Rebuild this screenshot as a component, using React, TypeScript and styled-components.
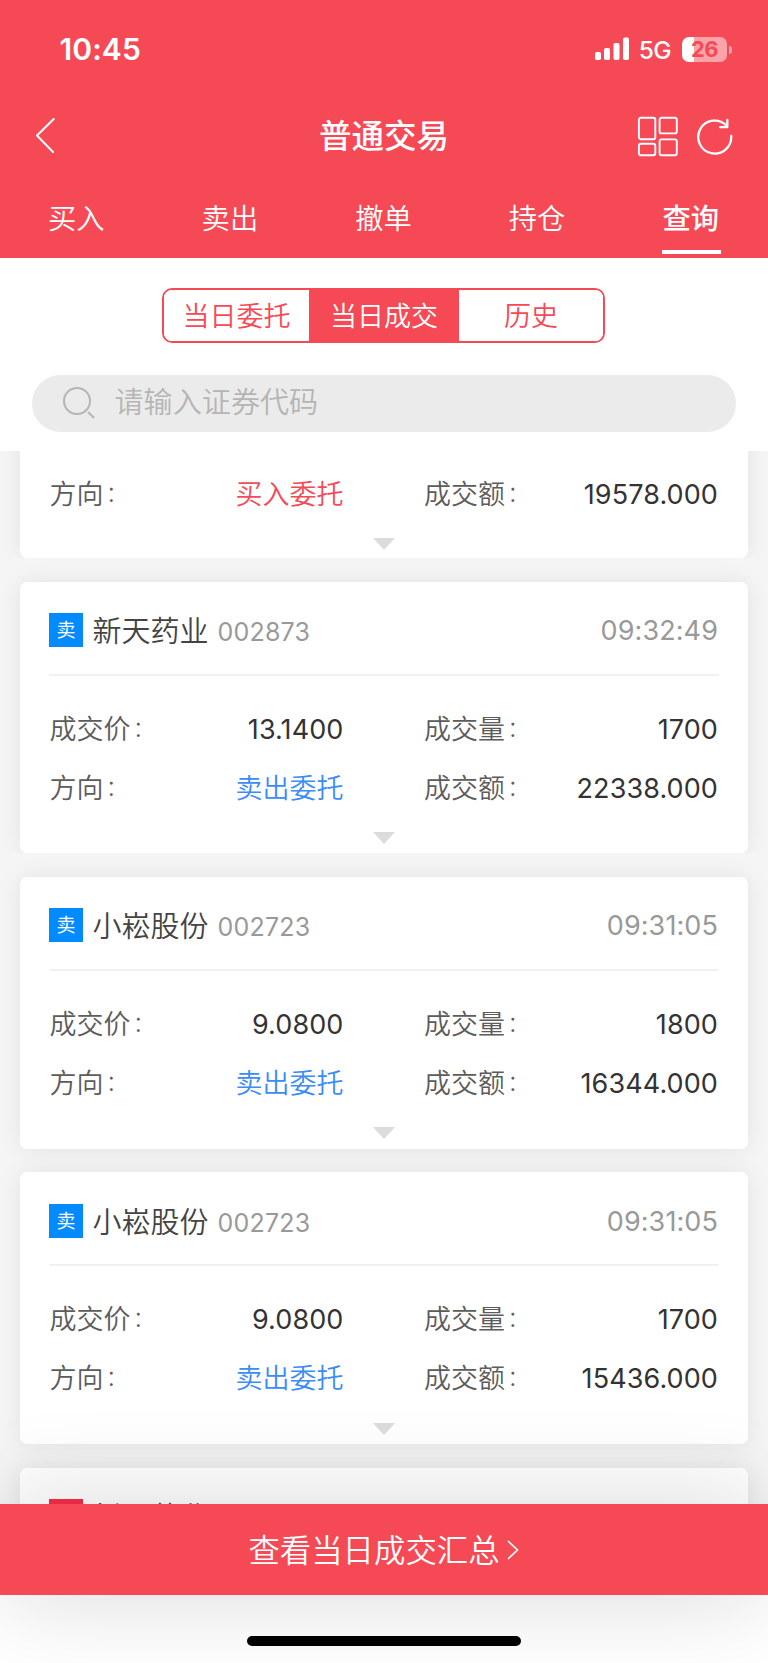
import React from "react";
import styled, { createGlobalStyle } from "styled-components";

const RED = "#f54a56";

const GlobalStyle = createGlobalStyle`
  * { box-sizing: border-box; }
  body {
    margin: 0;
    background: #fff;
    font-family: Inter, "Noto Sans CJK SC", sans-serif;
  }
`;

const Screen = styled.div`
  height: 1663px;
  display: flex;
  flex-direction: column;
  overflow: hidden;
  background: #fff;
`;

const Header = styled.header`
  height: 258px;
  flex: none;
  background: ${RED};
  color: #fff;
  display: flex;
  flex-direction: column;
`;

const StatusBar = styled.div`
  height: 98px;
  padding: 0 36px 0 59.5px;
  display: flex;
  align-items: center;
  justify-content: space-between;
`;

const Clock = styled.span`
  font-size: 30px;
  font-weight: 600;
  letter-spacing: 0.1px;
`;

const StatusIcons = styled.div`
  display: flex;
  align-items: center;
`;

const Network = styled.span`
  margin: 2px 0 0 10px;
  font-size: 24.5px;
  font-weight: 500;
  letter-spacing: -0.6px;
  line-height: 30px;
`;

const Battery = styled.div`
  position: relative;
  width: 45px;
  height: 25px;
  margin: 0 5px 0 11px;
  border-radius: 7px;
  background: linear-gradient(90deg, #fff 12px, #faa4aa 12px);
  color: ${RED};
  font-size: 22px;
  font-weight: 700;
  line-height: 25px;
  text-align: center;
  letter-spacing: -0.6px;

  &::after {
    content: "";
    position: absolute;
    right: -5px;
    top: 9px;
    width: 3px;
    height: 8px;
    border-radius: 0 4px 4px 0;
    background: #faa4aa;
  }
`;

const NavBar = styled.div`
  height: 76px;
  padding: 0 35px;
  display: grid;
  grid-template-columns: 1fr auto 1fr;
  align-items: center;
`;

const Title = styled.h1`
  margin: 0;
  padding-top: 1px;
  font-size: 32.5px;
  font-weight: 500;
  line-height: 48px;
`;

const Actions = styled.div`
  display: flex;
  justify-content: flex-end;
  gap: 18px;
`;

const Tabs = styled.nav`
  flex: 1;
  display: grid;
  grid-template-columns: repeat(5, 1fr);
  justify-items: center;
`;

const Tab = styled.div<{ $active?: boolean }>`
  height: 80px;
  width: 59px;
  padding-right: 1px;
  border-bottom: 4px solid ${(p) => (p.$active ? "#fff" : "transparent")};
  font-size: 28.3px;
  font-weight: ${(p) => (p.$active ? 500 : 350)};
  line-height: 91px;
  display: flex;
  justify-content: center;
  white-space: nowrap;
`;

const Filters = styled.section`
  height: 193px;
  flex: none;
  padding: 30px 32px 0;
  display: flex;
  flex-direction: column;
  align-items: center;
  gap: 31.5px;
`;

const Segmented = styled.div`
  width: 443px;
  height: 55px;
  margin-right: 1px;
  display: grid;
  grid-template-columns: 145px 150px 1fr;
  border: 2px solid ${RED};
  border-radius: 10px;
  overflow: hidden;
`;

const Segment = styled.div<{ $active?: boolean }>`
  display: flex;
  align-items: center;
  justify-content: center;
  padding-top: 2px;
  font-size: 27px;
  line-height: 40px;
  font-weight: 350;
  color: ${(p) => (p.$active ? "#fff" : RED)};
  background: ${(p) => (p.$active ? RED : "#fff")};
`;

const Search = styled.div`
  width: 704px;
  height: 57px;
  border-radius: 29px;
  padding-left: 31px;
  background: #ebebeb;
  color: #b5b5b5;
  display: flex;
  align-items: center;
  gap: 19.5px;
  font-size: 29.1px;
  font-weight: 350;
  line-height: 58px;
`;

const List = styled.main`
  height: 1053px;
  flex: none;
  overflow: hidden;
  display: flex;
  flex-direction: column;
  background: #f5f5f5;
`;

const Row = styled.div<{ $open?: boolean }>`
  height: 295.3px;
  flex: none;
  padding: 23.7px 20px 0;
  overflow: ${(p) => (p.$open ? "visible" : "hidden")};
`;

const TailRow = styled.div`
  height: 107px;
  flex: none;
  padding: 0 20px;
  overflow: hidden;
  display: flex;
  flex-direction: column;
  justify-content: flex-end;
`;

const Card = styled.article<{ $tail?: boolean }>`
  height: 271.6px;
  flex: none;
  padding: 0 29px ${(p) => (p.$tail ? "8px" : "0")};
  border-radius: 7px;
  background: #fff;
  box-shadow: 0 0 24px rgba(0, 0, 0, 0.08);
  display: flex;
  flex-direction: column;
  justify-content: ${(p) => (p.$tail ? "flex-end" : "flex-start")};
`;

const CardHead = styled.div`
  height: 94px;
  border-bottom: 2px solid #f1f1f1;
  display: flex;
  align-items: center;
  padding-top: 4.5px;
`;

const Badge = styled.span<{ $buy?: boolean }>`
  width: 34px;
  height: 34px;
  background: ${(p) => (p.$buy ? "#fa2c48" : "#028bff")};
  color: #fff;
  font-size: 19px;
  line-height: 36px;
  text-align: center;
`;

const Name = styled.span`
  margin: 4px 0 0 9.5px;
  font-size: 29px;
  font-weight: 350;
  line-height: 40px;
  color: #444;
`;

const Code = styled.span`
  margin: 4px 0 0 9px;
  font-size: 25px;
  line-height: 34px;
  letter-spacing: 0.2px;
  color: #999;
`;

const Time = styled.span`
  margin: 1px 1px 0 auto;
  font-size: 27px;
  letter-spacing: 0.1px;
  color: #999;
`;

const Details = styled.div`
  padding: 24.5px 1px 0 0.5px;
  display: grid;
  grid-template-columns: 294px 294px;
  justify-content: space-between;
  grid-auto-rows: 59px;
`;

const Field = styled.div`
  display: flex;
  align-items: center;
  justify-content: space-between;
  line-height: 40px;
`;

const Label = styled.span`
  font-size: 27px;
  font-weight: 350;
  color: #5c5c5c;
`;

const Colon = styled.span`
  margin-left: 4px;
  line-height: 30px;
  vertical-align: 2px;
`;

const Value = styled.span<{ $color?: string }>`
  font-size: 27px;
  font-weight: ${(p) => (p.$color ? 350 : 400)};
  letter-spacing: ${(p) => (p.$color ? "0" : "0.1px")};
  color: ${(p) => p.$color || "#333"};
`;

const Expand = styled.svg`
  display: block;
  margin: 14px auto 0;
`;

const SummaryButton = styled.div`
  position: relative;
  z-index: 1;
  height: 91px;
  flex: none;
  background: ${RED};
  box-shadow: 0 0 100px rgba(0, 0, 0, 0.16);
  color: #fff;
  display: flex;
  align-items: center;
  justify-content: center;
  gap: 7px;
  padding-right: 1px;
  font-size: 31.4px;
  font-weight: 350;
`;

const SummaryText = styled.span`
  padding-top: 2px;
  line-height: 48px;
`;

const HomeArea = styled.footer`
  flex: 1;
  display: flex;
  justify-content: center;
  padding-top: 41px;
`;

const HomeIndicator = styled.div`
  position: relative;
  z-index: 2;
  width: 274px;
  height: 10px;
  border-radius: 5px;
  background: #000;
`;

type Trade = {
  side: "买" | "卖";
  name: string;
  code: string;
  time: string;
  price: string;
  volume: string;
  amount: string;
};

const trades: Trade[] = [
  { side: "卖", name: "新天药业", code: "002873", time: "09:32:49", price: "13.1400", volume: "1700", amount: "22338.000" },
  { side: "卖", name: "小崧股份", code: "002723", time: "09:31:05", price: "9.0800", volume: "1800", amount: "16344.000" },
  { side: "卖", name: "小崧股份", code: "002723", time: "09:31:05", price: "9.0800", volume: "1700", amount: "15436.000" },
];

function Item({ label, value, color }: { label: string; value: string; color?: string }) {
  return (
    <Field>
      <Label>
        {label}
        <Colon>:</Colon>
      </Label>
      <Value $color={color}>{value}</Value>
    </Field>
  );
}

function ExpandArrow() {
  return (
    <Expand width="22" height="12" viewBox="0 0 22 12">
      <path d="M0 0H22L11 12Z" fill="#dcdcdc" />
    </Expand>
  );
}

function TradeCard({ trade }: { trade: Trade }) {
  const buy = trade.side === "买";
  return (
    <Card>
      <CardHead>
        <Badge $buy={buy}>{trade.side}</Badge>
        <Name>{trade.name}</Name>
        <Code>{trade.code}</Code>
        <Time>{trade.time}</Time>
      </CardHead>
      <Details>
        <Item label="成交价" value={trade.price} />
        <Item label="成交量" value={trade.volume} />
        <Item label="方向" value={buy ? "买入委托" : "卖出委托"} color={buy ? RED : "#3a8cf8"} />
        <Item label="成交额" value={trade.amount} />
      </Details>
      <ExpandArrow />
    </Card>
  );
}

export default function App() {
  return (
    <Screen>
      <GlobalStyle />
      <Header>
        <StatusBar>
          <Clock>10:45</Clock>
          <StatusIcons>
            <svg width="34" height="24" viewBox="0 0 34 24" fill="#fff">
              <rect x="0" y="15" width="6" height="8" rx="1.8" />
              <rect x="9" y="11" width="6" height="12" rx="1.8" />
              <rect x="18.5" y="6" width="6" height="17" rx="1.8" />
              <rect x="28" y="0.5" width="6" height="22.5" rx="1.8" />
            </svg>
            <Network>5G</Network>
            <Battery>26</Battery>
          </StatusIcons>
        </StatusBar>
        <NavBar>
          <svg width="20" height="36" viewBox="0 0 20 36" fill="none" stroke="#fff" strokeWidth="2" strokeLinecap="round" strokeLinejoin="round">
            <path d="M18.7 1L2 17.5L18 34" />
          </svg>
          <Title>普通交易</Title>
          <Actions>
            <svg width="41" height="41" viewBox="0 0 41 41" fill="none" stroke="#fff" strokeWidth="1.9">
              <rect x="1.9" y="1.8" width="16.4" height="21.4" rx="2" />
              <rect x="22.6" y="1.8" width="17.2" height="15.6" rx="2" />
              <rect x="1.9" y="27.7" width="16.4" height="11.6" rx="2" />
              <rect x="22.6" y="23.4" width="17.2" height="15.9" rx="2" />
            </svg>
            <svg width="37" height="41" viewBox="0 0 37 41" fill="none" stroke="#fff" strokeWidth="2.3" strokeLinecap="round" strokeLinejoin="round">
              <path d="M35.2 20A16.5 16.5 0 1 1 30.4 9.4" />
              <path d="M31.3 4V11.2H24.2" />
            </svg>
          </Actions>
        </NavBar>
        <Tabs>
          <Tab>买入</Tab>
          <Tab>卖出</Tab>
          <Tab>撤单</Tab>
          <Tab>持仓</Tab>
          <Tab $active>查询</Tab>
        </Tabs>
      </Header>
      <Filters>
        <Segmented>
          <Segment>当日委托</Segment>
          <Segment $active>当日成交</Segment>
          <Segment>历史</Segment>
        </Segmented>
        <Search>
          <svg width="32" height="32" viewBox="0 0 32 32" fill="none" stroke="#b5b5b5" strokeWidth="2">
            <circle cx="14" cy="14" r="13" />
            <path d="M25 25L31 31" />
          </svg>
          请输入证券代码
        </Search>
      </Filters>
      <List>
        <TailRow>
          <Card $tail>
            <Details>
              <Item label="方向" value="买入委托" color={RED} />
              <Item label="成交额" value="19578.000" />
            </Details>
            <ExpandArrow />
          </Card>
        </TailRow>
        {trades.map((trade, i) => (
          <Row key={i} $open={i > 0}>
            <TradeCard trade={trade} />
          </Row>
        ))}
        <Row $open>
          <Card>
            <CardHead>
              <Badge $buy>买</Badge>
              <Name>新天药业</Name>
            </CardHead>
          </Card>
        </Row>
      </List>
      <SummaryButton>
        <SummaryText>查看当日成交汇总</SummaryText>
        <svg width="12" height="20" viewBox="0 0 12 20" fill="none" stroke="#fff" strokeWidth="1.7">
          <path d="M1 1L10.5 10L1 19" />
        </svg>
      </SummaryButton>
      <HomeArea>
        <HomeIndicator />
      </HomeArea>
    </Screen>
  );
}
